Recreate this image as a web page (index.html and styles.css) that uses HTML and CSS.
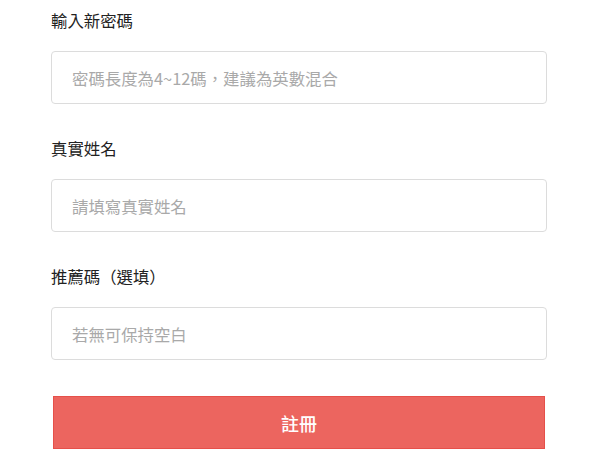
FILE: index.html
```html
<!DOCTYPE html>
<html lang="zh-Hant">
<head>
    <meta charset="UTF-8">
    <meta name="viewport" content="width=device-width, initial-scale=1.0">
    <title>註冊</title>
    <link rel="stylesheet" href="styles.css">
</head>
<body>

    <!-- Register form -->
    <form class="register-form">
        <div class="field">
            <label class="field-label" for="new-password">輸入新密碼</label>
            <input class="field-input" id="new-password" type="password" placeholder="密碼長度為4~12碼，建議為英數混合">
        </div>

        <div class="field">
            <label class="field-label" for="real-name">真實姓名</label>
            <input class="field-input" id="real-name" type="text" placeholder="請填寫真實姓名">
        </div>

        <div class="field">
            <label class="field-label" for="referral">推薦碼（選填）</label>
            <input class="field-input" id="referral" type="text" placeholder="若無可保持空白">
        </div>

        <button class="submit-btn" type="submit">註冊</button>
    </form>

</body>
</html>
```

FILE: styles.css
```css
/* Page */
body {
    margin: 0;
    padding: 0;
    background: #fff;
    font-family: "Noto Sans CJK TC", "Noto Sans", sans-serif;
    color: #222;
}

.register-form {
    display: flex;
    flex-direction: column;
    padding: 8px 53px 0 51px;
}

/* Fields */
.field {
    display: flex;
    flex-direction: column;
    gap: 19px;
    margin-bottom: 32px;
}

.field-label {
    font-size: 16.4px;
    line-height: 24px;
    height: 24px;
}

.field-input {
    box-sizing: border-box;
    height: 53px;
    padding: 0 20px;
    border: 1px solid #dcdcdc;
    border-radius: 4px;
    font-family: inherit;
    font-size: 16.4px;
    color: #222;
    outline: none;
}

.field-input::placeholder {
    color: #a9a9a9;
}

/* Submit button */
.submit-btn {
    box-sizing: border-box;
    height: 53px;
    margin: 4px 2px 0;
    border: 1px solid #e6504a;
    border-radius: 0;
    background-color: #ec655f;
    color: #fff;
    font-family: inherit;
    font-size: 18px;
    font-weight: 500;
    cursor: pointer;
}
```
